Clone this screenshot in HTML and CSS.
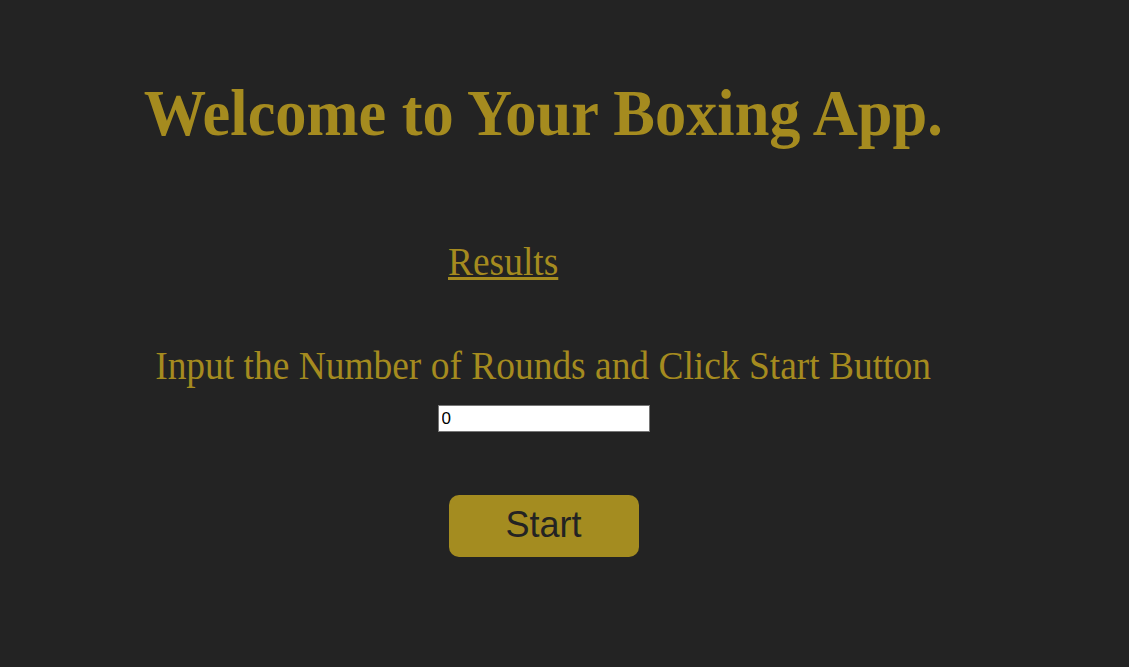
FILE: index.html
```html
<!DOCTYPE html>
<html>
<head>
<meta charset="utf-8">
<link rel="stylesheet" href="styles.css">
</head>
<body>
<div class="page">
  <h1 class="title">Welcome to Your Boxing App.</h1>
  <div class="results-row"><a class="results" href="#">Results</a></div>
  <p class="prompt">Input the Number of Rounds and Click Start Button</p>
  <input class="rounds" type="text" value="0">
  <button class="start">Start</button>
</div>
</body>
</html>
```

FILE: styles.css
```css
html, body {
  margin: 0;
  padding: 0;
  background: #232323;
  height: 100%;
}
.page {
  width: 1087px;
  display: flex;
  flex-direction: column;
  align-items: center;
  font-family: "Liberation Serif", serif;
  color: #a58b1f;
}
.title {
  margin: 82px 0 0 0;
  font-size: 65px;
  font-weight: bold;
  line-height: 62px;
  white-space: nowrap;
  transform: scaleX(0.96);
}
.results-row {
  width: 100%;
  display: flex;
  justify-content: flex-start;
  margin-top: 98px;
}
.results {
  margin-left: 448px;
  font-size: 39px;
  line-height: 40px;
  color: #a58b1f;
  display: inline-block;
  transform: scaleX(0.96);
  transform-origin: left center;
}
.prompt {
  margin: 62px 0 0 0;
  font-size: 39px;
  line-height: 44px;
  white-space: nowrap;
  transform: scaleX(0.96);
}
.rounds {
  margin-top: 17px;
  width: 212px;
  height: 27px;
  box-sizing: border-box;
  border: 1px solid #767676;
  padding: 0 3px;
  font-family: "Liberation Sans", sans-serif;
  font-size: 17px;
  color: #000;
  background: #fff;
}
.start {
  margin-top: 63px;
  width: 190px;
  height: 62px;
  border: none;
  border-radius: 10px;
  background: #a48c20;
  color: #232323;
  font-family: "Liberation Sans", sans-serif;
  font-size: 36px;
  padding: 0 0 2px 0;
}
```
